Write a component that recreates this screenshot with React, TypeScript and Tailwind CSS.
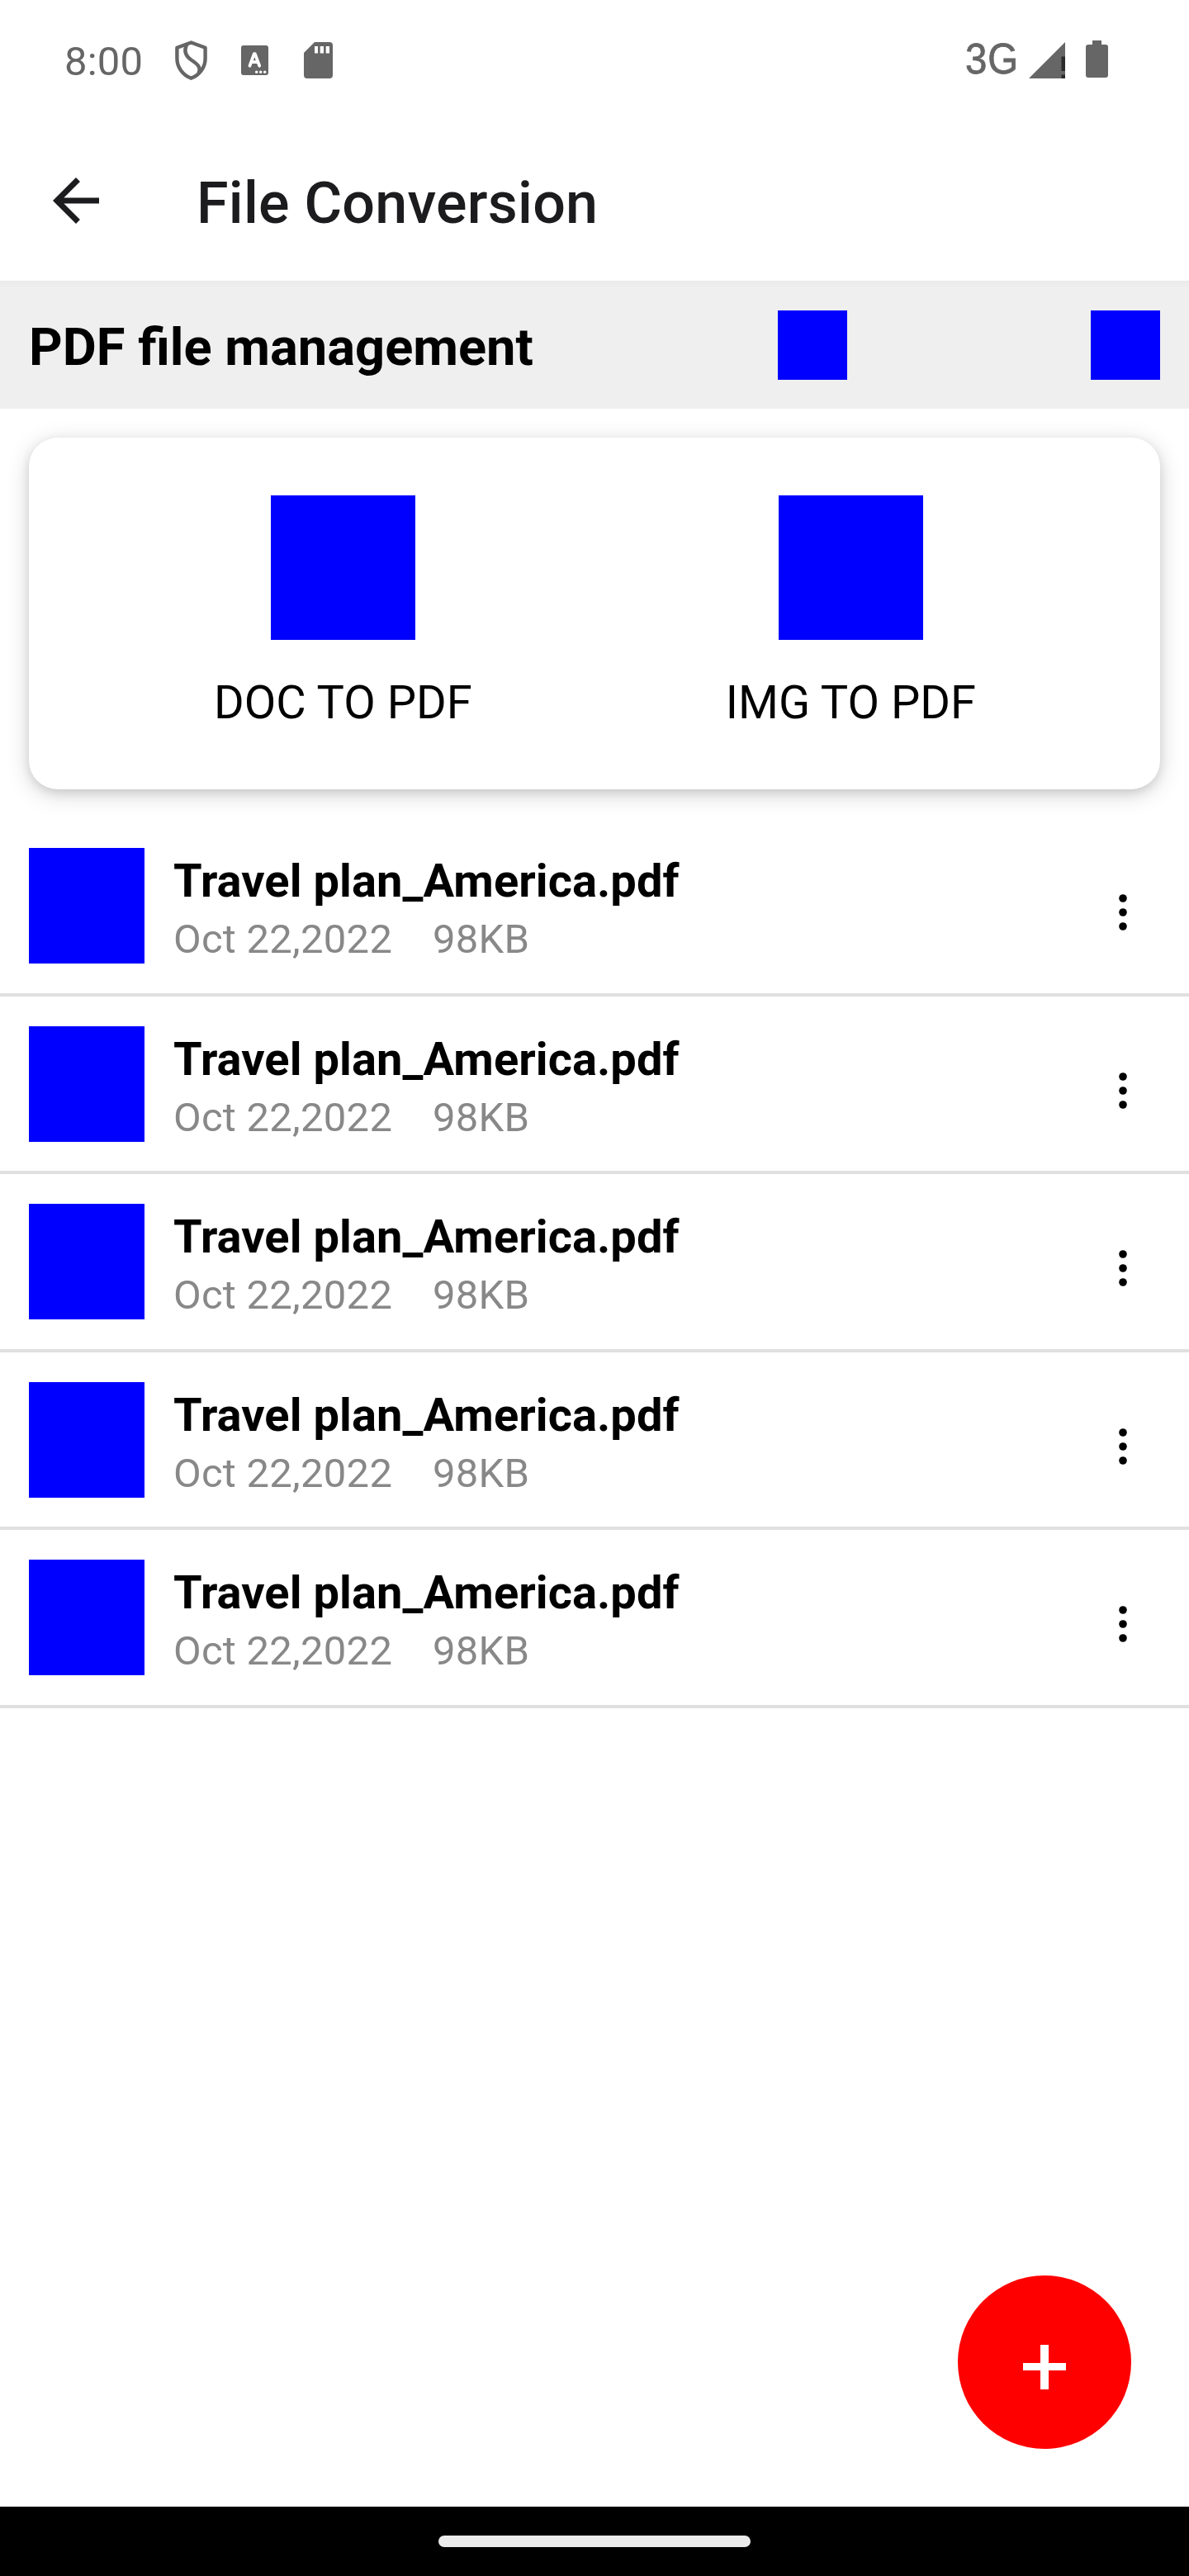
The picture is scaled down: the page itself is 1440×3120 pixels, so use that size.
const files = Array.from({ length: 5 }, (_, id) => ({
  id,
  name: "Travel plan_America.pdf",
  date: "Oct 22,2022",
  size: "98KB",
}));

function StatusBar() {
  return (
    <div className="flex h-[146px] items-center justify-between pr-[98px] pl-[78px] text-[#666]">
      <div className="flex items-center">
        <span className="mt-[2px] w-[134px] text-[49px] leading-[57px] tracking-[0.2px]">8:00</span>
        <svg className="h-[48px] w-[39px]" viewBox="0 0 39 48" fill="none" stroke="currentColor" strokeWidth="4.4" strokeLinejoin="round">
          <path d="M19.5 2.5 36.6 8.7V22C36.6 32.5 29.5 42.3 19.5 45.7 9.5 42.3 2.4 32.5 2.4 22V8.7Z" />
          <path d="M14.5 4.5C10.5 12 12.5 18.5 19.5 23.5 27 28.5 32 32.5 28.5 40" />
        </svg>
        <svg className="ml-[41px] h-[36px] w-[33px]" viewBox="0 0 33 36">
          <rect width="33" height="36" rx="3" fill="currentColor" />
          <path d="M10.5 24.7 15.8 10.2H16.8L22.2 24.7M12.5 20.2H20.5" fill="none" stroke="#fff" strokeWidth="3.8" strokeLinecap="round" strokeLinejoin="round" />
          <g fill="#fff">
            <circle cx="18.7" cy="32.2" r="1.7" />
            <circle cx="23.7" cy="32.2" r="1.7" />
            <circle cx="28.7" cy="32.2" r="1.7" />
          </g>
        </svg>
        <svg className="ml-[43px] h-[44px] w-[35px]" viewBox="0 0 35 44">
          <path d="M13 0H31Q35 0 35 4V40Q35 44 31 44H4Q0 44 0 40V13Z" fill="currentColor" />
          <path d="M13 5H17V13.5H13ZM19.7 5H24V13.5H19.7ZM26.7 5H31V13.5H26.7Z" fill="#fff" />
        </svg>
      </div>
      <div className="flex items-center">
        <span className="-mt-[2px] w-[77px] origin-left scale-x-[0.93] font-['Liberation_Sans'] text-[51px] leading-[58px] tracking-[1px] [-webkit-text-stroke:0.8px_currentColor]">
          3G
        </span>
        <svg className="h-[44px] w-[44px]" viewBox="0 0 44 44">
          <path d="M44 0V44H0Z" fill="currentColor" />
          <path d="M39.5 17.5H44V35H39.5ZM39.5 39.5H44V44H39.5Z" fill="#2b2b2b" />
        </svg>
        <svg className="-mt-[3px] ml-[25px] h-[45px] w-[27px]" viewBox="0 0 27 45">
          <path d="M8 0H19V5H24Q27 5 27 8V42Q27 45 24 45H3Q0 45 0 42V8Q0 5 3 5H8Z" fill="currentColor" />
        </svg>
      </div>
    </div>
  );
}

function ToolBar() {
  return (
    <header className="flex h-[194px] items-center pl-[64px]">
      <svg className="h-[56px] w-[56px]" viewBox="4 4 16 16">
        <path d="M20 11H7.83l5.59-5.59L12 4l-8 8 8 8 1.41-1.41L7.83 13H20v-2z" fill="#1c1c1e" />
      </svg>
      <h1 className="mt-[6px] ml-[118px] text-[70px] leading-[82px] font-medium tracking-[0.25px] text-[#1c1c1e]">File Conversion</h1>
    </header>
  );
}

function Action({ label }: { label: string }) {
  return (
    <div className="flex flex-col items-center">
      <div className="h-[175px] w-[175px] bg-[#0000ff]" />
      <span className="mt-[43px] text-[56px] leading-[66px]">{label}</span>
    </div>
  );
}

function FileRow({ name, date, size }: { name: string; date: string; size: string }) {
  return (
    <li className="flex h-[215.5px] items-start border-b-[4px] border-[#e0e0e0] px-[35px] pt-[35.8px]">
      <div className="h-[140px] w-[140px] bg-[#0000ff]" />
      <div className="ml-[35px] flex-1">
        <div className="mt-[7px] text-[56px] leading-[66px] font-bold tracking-[0.08px]">{name}</div>
        <div className="mt-[9px] flex text-[49px] leading-[57px] tracking-[0.25px] text-[#888]">
          <span className="w-[314px]">{date}</span>
          <span>{size}</span>
        </div>
      </div>
      <svg className="mt-[55px] mr-[40px] h-[46px] w-[10px]" viewBox="0 0 10 46">
        <circle cx="5" cy="6" r="4.8" />
        <circle cx="5" cy="23" r="4.8" />
        <circle cx="5" cy="40" r="4.8" />
      </svg>
    </li>
  );
}

export default function App() {
  return (
    <div className="relative flex h-[3120px] w-[1440px] flex-col overflow-hidden bg-white font-[Roboto,sans-serif] text-black">
      <StatusBar />
      <ToolBar />
      <section className="flex h-[155px] items-center justify-between bg-[#efefef] px-[35px] shadow-[inset_0_8px_10px_-6px_rgba(0,0,0,0.03)]">
        <h2 className="mt-[5px] text-[63.2px] leading-[74px] font-bold">PDF file management</h2>
        <div className="flex w-[463px] justify-between">
          <div className="h-[84px] w-[84px] bg-[#0000ff]" />
          <div className="h-[84px] w-[84px] bg-[#0000ff]" />
        </div>
      </section>
      <section className="mx-[35px] mt-[35px] flex h-[426px] justify-around rounded-[35px] bg-white pt-[70px] pr-[69.5px] pl-[70.5px] shadow-[0_6px_28px_rgba(0,0,0,0.17),0_4px_12px_rgba(0,0,0,0.1)]">
        <Action label="DOC TO PDF" />
        <Action label="IMG TO PDF" />
      </section>
      <ul className="mt-[35.3px] flex-1">
        {files.map((file) => (
          <FileRow key={file.id} name={file.name} date={file.date} size={file.size} />
        ))}
      </ul>
      <button aria-label="Add" className="absolute top-[2756px] left-[1160px] flex h-[210px] w-[210px] justify-center rounded-full bg-[#ff0000] pt-[84px]">
        <svg className="h-[54px] w-[52px]" viewBox="0 0 52 54">
          <path d="M21 0H31V22H52V31H31V54H21V31H0V22H21Z" fill="#fff" />
        </svg>
      </button>
      <nav className="flex h-[84px] items-center justify-center bg-black">
        <div className="h-[14px] w-[378px] rounded-full bg-[#ebebeb]" />
      </nav>
    </div>
  );
}
